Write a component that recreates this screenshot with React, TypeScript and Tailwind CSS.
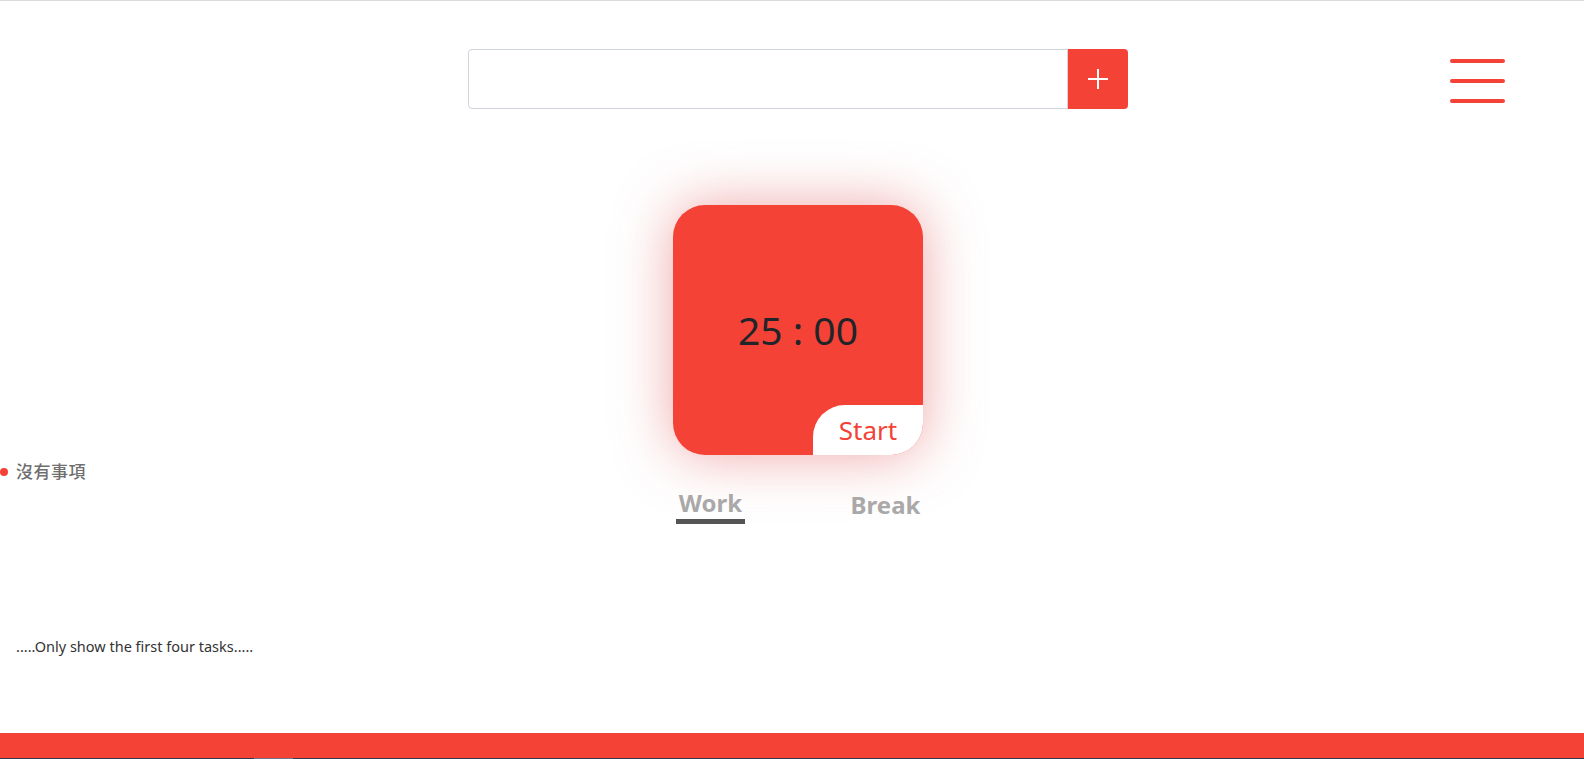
import React from "react";

export default function App() {
  const font = { fontFamily: '"Noto Sans", "Noto Sans CJK TC", sans-serif' };
  return (
    <div className="min-h-screen flex flex-col bg-white border-t border-[#dadada]" style={font}>
      {/* header */}
      <div className="flex pt-[48px]">
        <div className="w-[312px] shrink-0" />
        <div className="flex-1 flex justify-center">
          <div className="flex h-[60px]">
            <input className="w-[600px] h-[60px] border border-[#ced4da] rounded-l-[4px] outline-none px-3" />
            <button className="w-[60px] h-[60px] bg-[#f44336] rounded-r-[4px] flex items-center justify-center">
              <svg width="22" height="22" viewBox="0 0 22 22">
                <path d="M11 1V21M1 11H21" stroke="white" strokeWidth="2" />
              </svg>
            </button>
          </div>
        </div>
        <div className="w-[300px] shrink-0 flex justify-end pr-[79px] pt-[10px]">
          <div className="w-[55px] h-[44px] flex flex-col justify-between">
            <span className="block h-[4px] rounded-full bg-[#f44336]" />
            <span className="block h-[4px] rounded-full bg-[#f44336]" />
            <span className="block h-[4px] rounded-full bg-[#f44336]" />
          </div>
        </div>
      </div>

      {/* main */}
      <div className="flex">
        <div className="w-[312px] shrink-0 pt-[351px]">
          <div className="flex items-center h-[24px]">
            <span className="block w-[8px] h-[8px] rounded-full bg-[#f44336]" />
            <span className="ml-[8px] text-[17px] tracking-[0.5px] font-medium text-[#6f6f6f]">沒有事項</span>
          </div>
          <div className="mt-[152px] pl-[16px] text-[14.5px] text-[#333333]">.....Only show the first four tasks.....</div>
        </div>
        <div className="flex-1 flex flex-col items-center pt-[96px]">
          <div className="relative w-[250px] h-[250px] rounded-[32px] bg-[#f44336] shadow-[0_0_55px_rgba(225,80,80,0.5)] overflow-hidden flex items-center justify-center">
            <span className="text-[39px] text-[#212529] leading-none -mt-[2px]">25 : 00</span>
            <div className="absolute right-0 bottom-0 w-[110px] h-[50px] bg-white rounded-tl-[32px] flex items-center justify-center">
              <span className="text-[26px] text-[#f44336] leading-none">Start</span>
            </div>
          </div>
          <div className="w-[350px] grid grid-cols-2 mt-[32px]">
            <div className="flex justify-center">
              <span className="px-[3px] border-b-[5px] border-[#555555] text-[24px] font-bold text-[#aaaaaa] leading-[32px]">Work</span>
            </div>
            <div className="flex justify-center">
              <span className="mt-[2px] text-[24px] font-bold text-[#aaaaaa] leading-[32px]">Break</span>
            </div>
          </div>
        </div>
        <div className="w-[300px] shrink-0" />
      </div>

      {/* footer */}
      <div className="mt-auto">
        <div className="h-[25px] bg-[#f44336]" />
        <div className="h-[1px] bg-[#2f3b45] flex">
          <div className="ml-[254px] w-[39px] h-[1px] bg-[#6b7680]" />
        </div>
      </div>
    </div>
  );
}
